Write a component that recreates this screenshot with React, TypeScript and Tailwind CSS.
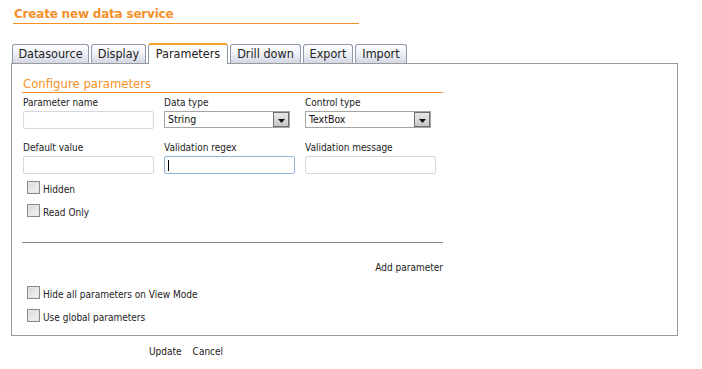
import React from "react";

const font = "font-['DejaVu_Sans_Condensed','DejaVu_Sans',sans-serif]";

function Tab({ label, active, w }: { label: string; active?: boolean; w: string }) {
  if (active) {
    return (
      <div
        className={`${w} h-[21px] -mt-[2px] border border-b-0 border-[#8e9aaa] border-t-[2px] border-t-[#f5a623] rounded-t-[3px] bg-white flex items-center justify-center text-[12.5px] text-[#222] relative top-[1px]`}
      >
        {label}
      </div>
    );
  }
  return (
    <div
      className={`${w} h-[19px] border border-b-0 border-[#8e9aaa] rounded-t-[3px] bg-gradient-to-b from-white via-[#eef0f6] to-[#d3d7e4] flex items-center justify-center text-[12.5px] text-[#222]`}
    >
      {label}
    </div>
  );
}

function Check({ label }: { label: string }) {
  return (
    <div className="flex items-center h-[13px]">
      <span className="w-[13px] h-[13px] border border-[#8a8a8a] bg-gradient-to-br from-[#d8d8d8] to-[#f4f4f4] shadow-[inset_0_0_0_1px_#e6e6e6]" />
      <span className="ml-[3px] mt-[3px] text-[10px] text-[#222]">{label}</span>
    </div>
  );
}

function Input({ focused }: { focused?: boolean }) {
  return (
    <div
      className={`w-[131px] h-[18px] border rounded-[2px] bg-white ${
        focused ? "border-[#8fb3d9]" : "border-[#d4d8df]"
      } flex items-center pl-[3px]`}
    >
      {focused && <span className="w-[1px] h-[11px] bg-black" />}
    </div>
  );
}

function Select({ value }: { value: string }) {
  return (
    <div className="w-[126px] h-[17px] border border-[#a5a5a5] bg-white flex items-center justify-between">
      <span className="pl-[3px] text-[10.5px] text-[#111]">{value}</span>
      <span className="w-[16px] h-[15px] border border-[#6f6f6f] bg-gradient-to-b from-[#e8e8e8] to-[#c8c8c8] flex items-end justify-center pb-[3px]">
        <svg width="7" height="4" viewBox="0 0 7 4">
          <path d="M0 0h7L3.5 4z" fill="#111" />
        </svg>
      </span>
    </div>
  );
}

function Label({ children }: { children: React.ReactNode }) {
  return <div className="text-[10px] leading-[12px] text-[#222] h-[12px]">{children}</div>;
}

export default function App() {
  return (
    <div className={`${font} w-[702px] h-[369px] bg-white pl-[11px] pt-[7px]`}>
      <div className="ml-[2px] w-[346px] border-b border-[#f5912b] pl-[1px] pb-[1px] text-[12px] leading-[15px] font-bold text-[#f5912b] font-['DejaVu_Sans',sans-serif] tracking-[-0.2px]">
        Create new data service
      </div>
      <div className="mt-[20px] ml-[1px] flex gap-[2px] items-end">
        <Tab label="Datasource" w="w-[77px]" />
        <Tab label="Display" w="w-[55px]" />
        <Tab label="Parameters" w="w-[80px]" active />
        <Tab label="Drill down" w="w-[71px]" />
        <Tab label="Export" w="w-[50px]" />
        <Tab label="Import" w="w-[52px]" />
      </div>
      <div className="w-[667px] h-[273px] border border-[#9a9a9a] pl-[10px] pt-[12px]">
        <div className="w-[421px]">
          <div className="border-b border-[#f5912b] pl-[1px] text-[13px] leading-[15px] text-[#f5912b] pb-[1px]">
            Configure parameters
          </div>
          <div className="mt-[4px] pl-[1px] grid grid-cols-[141px_141px_131px] gap-y-[0px]">
            <div>
              <Label>Parameter name</Label>
              <div className="mt-[2px]">
                <Input />
              </div>
            </div>
            <div>
              <Label>Data type</Label>
              <div className="mt-[2px]">
                <Select value="String" />
              </div>
            </div>
            <div>
              <Label>Control type</Label>
              <div className="mt-[2px]">
                <Select value="TextBox" />
              </div>
            </div>
            <div className="mt-[13px]">
              <Label>Default value</Label>
              <div className="mt-[2px]">
                <Input />
              </div>
            </div>
            <div className="mt-[13px]">
              <Label>Validation regex</Label>
              <div className="mt-[2px]">
                <Input focused />
              </div>
            </div>
            <div className="mt-[13px]">
              <Label>Validation message</Label>
              <div className="mt-[2px]">
                <Input />
              </div>
            </div>
          </div>
          <div className="mt-[7px] ml-[5px] flex flex-col gap-[10px]">
            <Check label="Hidden" />
            <Check label="Read Only" />
          </div>
          <div className="mt-[25px] border-b border-[#8a8a8a]" />
          <div className="mt-[19px] text-right text-[10px] leading-[12px] text-[#222]">Add parameter</div>
          <div className="mt-[12px] ml-[5px] flex flex-col gap-[10px]">
            <Check label="Hide all parameters on View Mode" />
            <Check label="Use global parameters" />
          </div>
        </div>
      </div>
      <div className="mt-[8px] ml-[138px] flex gap-[11px] text-[10px] text-[#222]">
        <span>Update</span>
        <span>Cancel</span>
      </div>
    </div>
  );
}
